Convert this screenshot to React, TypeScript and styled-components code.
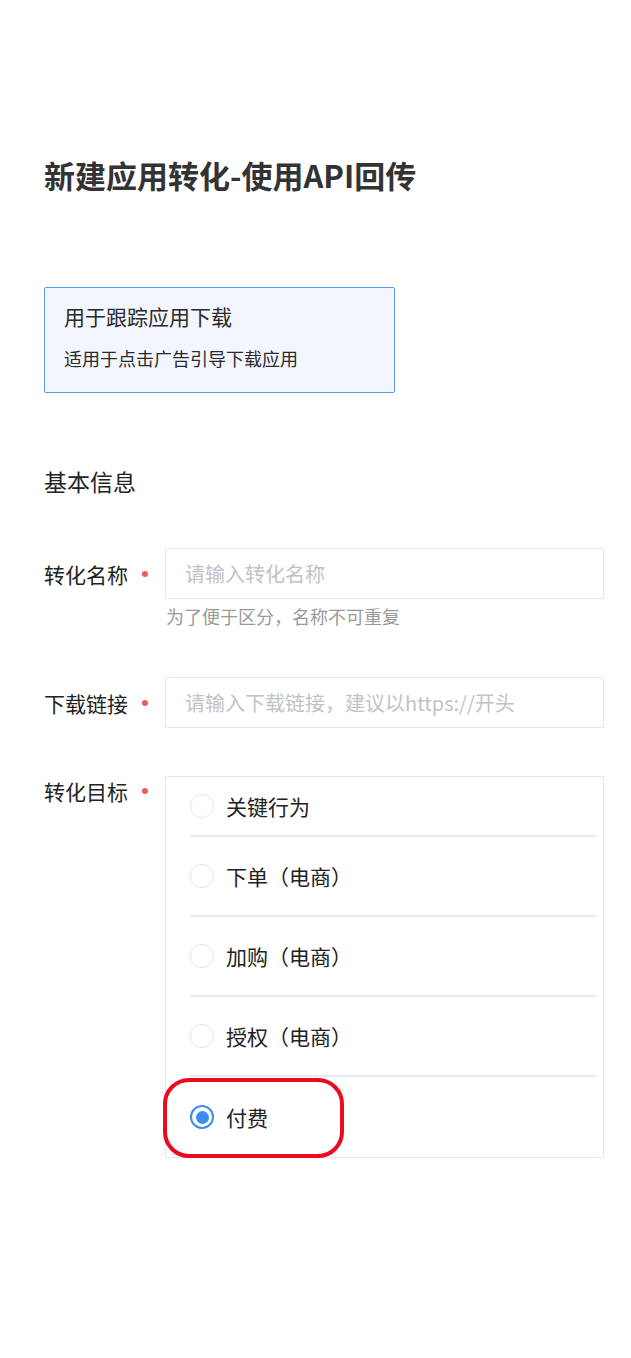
import React from "react";
import styled, { createGlobalStyle } from "styled-components";

const Global = createGlobalStyle`
  html, body { margin: 0; padding: 0; background: #fff; }
  body { font-family: "Noto Sans CJK SC", "Noto Sans", sans-serif; color: #222; }
  * { box-sizing: border-box; }
`;

const Page = styled.div`
  width: 631px;
  min-height: 1358px;
  padding: 155px 27px 0 44px;
  display: flex;
  flex-direction: column;
`;

const Title = styled.h1`
  margin: 0;
  font-size: 31px;
  line-height: 40px;
  font-weight: 700;
  color: #333;
  letter-spacing: 0;
`;

const TypeCard = styled.div`
  margin-top: 92px;
  width: 351px;
  height: 106px;
  border: 1px solid #5d9bf0;
  border-radius: 2px;
  background: #f3f6fe;
  padding: 15px 0 0 19px;
  display: flex;
  flex-direction: column;
  gap: 17px;
`;

const CardTitle = styled.div`
  font-size: 21px;
  line-height: 26px;
  color: #2a2a2a;
`;

const CardDesc = styled.div`
  font-size: 18px;
  line-height: 24px;
  color: #2a2a2a;
`;

const SectionTitle = styled.h2`
  margin: 73px 0 0;
  font-size: 23px;
  line-height: 30px;
  font-weight: 400;
  color: #222;
`;

const FieldRow = styled.div<{ $mt: number; $top?: boolean }>`
  margin-top: ${(p) => p.$mt}px;
  display: flex;
  align-items: ${(p) => (p.$top ? "flex-start" : "center")};
`;

const Label = styled.div`
  width: 121px;
  flex: none;
  display: flex;
  align-items: center;
  font-size: 21px;
  line-height: 30px;
  color: #222;
`;

const Required = styled.span`
  width: 6px;
  height: 6px;
  border-radius: 50%;
  background: #f25a5a;
  margin-left: 14px;
`;

const Input = styled.div`
  flex: 1;
  height: 51px;
  border: 1px solid #e1e6f6;
  border-radius: 2px;
  padding-left: 19px;
  display: flex;
  align-items: center;
  font-size: 20px;
  color: #c2c2c2;
`;

const Help = styled.div`
  margin: 5px 0 0 122px;
  font-size: 18px;
  line-height: 24px;
  color: #999;
`;

const OptionBox = styled.div`
  position: relative;
  flex: 1;
  border: 1px solid #e1e6f6;
  border-radius: 2px;
  padding: 0 6px 0 24px;
`;

const Option = styled.div<{ $h: number; $last?: boolean }>`
  height: ${(p) => p.$h}px;
  display: flex;
  align-items: center;
  gap: 12px;
  border-bottom: ${(p) => (p.$last ? "none" : "2px solid #e6eaf8")};
  font-size: 21px;
  color: #222;
`;

const Radio = styled.span<{ $checked?: boolean }>`
  width: 24px;
  height: 24px;
  flex: none;
  border-radius: 50%;
  border: ${(p) => (p.$checked ? "2px solid #3b8cf5" : "1.5px solid #dde3f4")};
  display: flex;
  align-items: center;
  justify-content: center;
  &::after {
    content: "";
    display: ${(p) => (p.$checked ? "block" : "none")};
    width: 13px;
    height: 13px;
    border-radius: 50%;
    background: #3b8cf5;
  }
`;

const Highlight = styled.div`
  position: absolute;
  left: -3px;
  bottom: -1px;
  width: 181px;
  height: 80px;
  border: 4px solid #ec0a1e;
  border-radius: 26px;
  pointer-events: none;
`;

const options = [
  { label: "关键行为", h: 60 },
  { label: "下单（电商）", h: 80 },
  { label: "加购（电商）", h: 80 },
  { label: "授权（电商）", h: 80 },
  { label: "付费", h: 80, checked: true },
];

export default function App() {
  return (
    <>
      <Global />
      <Page>
        <Title>新建应用转化-使用API回传</Title>
        <TypeCard>
          <CardTitle>用于跟踪应用下载</CardTitle>
          <CardDesc>适用于点击广告引导下载应用</CardDesc>
        </TypeCard>
        <SectionTitle>基本信息</SectionTitle>
        <FieldRow $mt={52}>
          <Label>
            转化名称<Required />
          </Label>
          <Input>请输入转化名称</Input>
        </FieldRow>
        <Help>为了便于区分，名称不可重复</Help>
        <FieldRow $mt={49}>
          <Label>
            下载链接<Required />
          </Label>
          <Input>请输入下载链接，建议以https://开头</Input>
        </FieldRow>
        <FieldRow $mt={48} $top>
          <Label>
            转化目标<Required />
          </Label>
          <OptionBox>
            {options.map((o, i) => (
              <Option key={o.label} $h={o.h} $last={i === options.length - 1}>
                <Radio $checked={o.checked} />
                {o.label}
              </Option>
            ))}
            <Highlight />
          </OptionBox>
        </FieldRow>
      </Page>
    </>
  );
}
